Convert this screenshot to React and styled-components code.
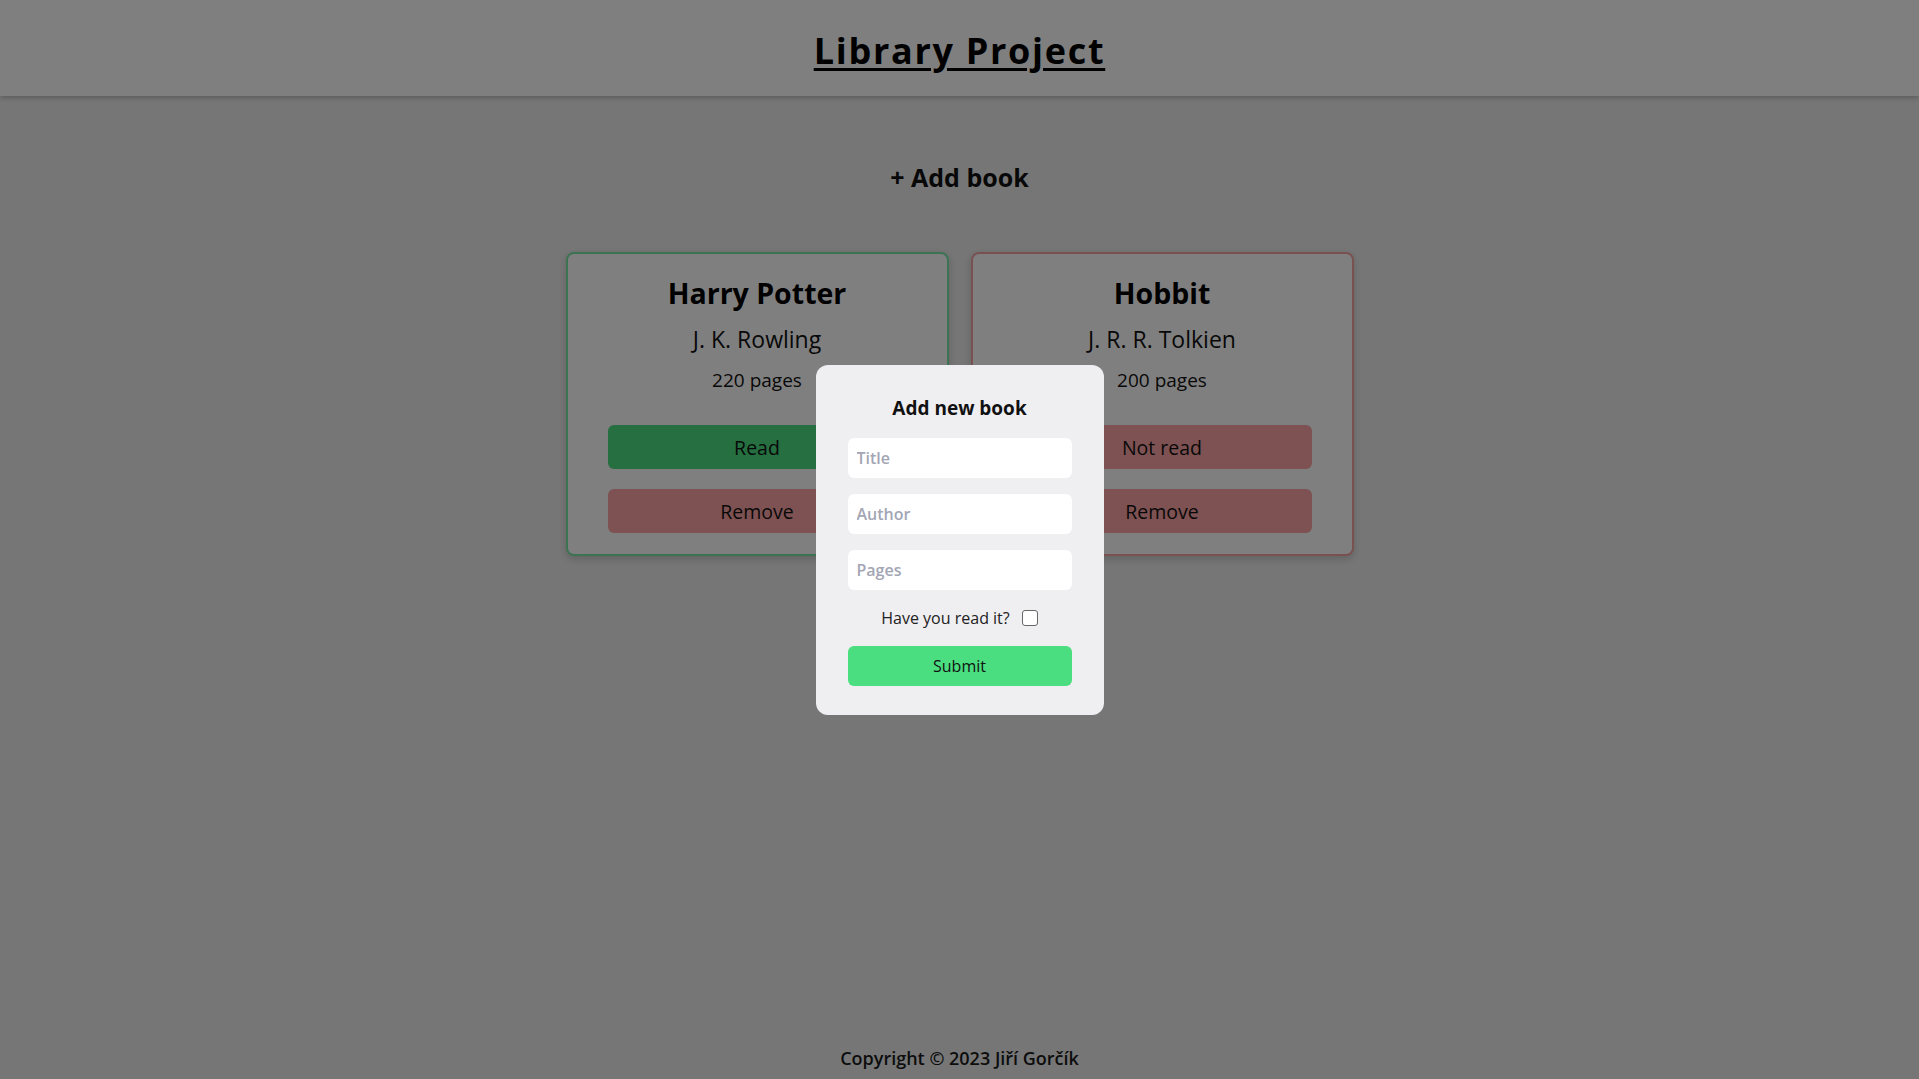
import React from "react";
import styled, { createGlobalStyle } from "styled-components";

const GlobalStyle = createGlobalStyle`
  * { box-sizing: border-box; }
  html, body { margin: 0; padding: 0; }
  body {
    font-family: "Open Sans", "Noto Sans", sans-serif;
    background: #eeeeee;
    color: #111;
  }
`;

const Page = styled.div`
  min-height: 100vh;
  display: flex;
  flex-direction: column;
  background: #ededed;
`;

const Header = styled.header`
  height: 96px;
  background: #ffffff;
  box-shadow: 0 2px 5px rgba(0, 0, 0, 0.22);
  display: flex;
  align-items: center;
  justify-content: center;
  position: relative;
  z-index: 1;
`;

const Title = styled.h1`
  margin: 0;
  font-size: 36px;
  line-height: 44px;
  font-weight: 700;
  letter-spacing: 1.7px;
  text-decoration: underline;
  text-decoration-thickness: 3px;
  text-underline-offset: 4px;
  color: #000;
  padding-top: 6px;
`;

const Main = styled.main`
  flex: 1;
  display: flex;
  flex-direction: column;
  align-items: center;
  padding-top: 64px;
`;

const AddButton = styled.button`
  background: none;
  border: none;
  font-family: inherit;
  font-size: 25px;
  line-height: 34px;
  font-weight: 700;
  color: #111;
  padding: 0;
  cursor: pointer;
`;

const CardGrid = styled.div`
  margin-top: 58px;
  display: grid;
  grid-template-columns: repeat(2, 383px);
  gap: 22px;
`;

const Card = styled.div`
  background: #ffffff;
  border: 2px solid ${(p) => (p.$read ? "#78e8a6" : "#f5a3a3")};
  border-radius: 8px;
  box-shadow: 0 3px 8px rgba(0, 0, 0, 0.18);
  padding: 19px 40px 21px;
  display: flex;
  flex-direction: column;
  align-items: center;
`;

const BookTitle = styled.h2`
  margin: 0;
  font-size: 28.5px;
  line-height: 40px;
  font-weight: 700;
  color: #000;
`;

const Author = styled.p`
  margin: 11px 0 0;
  font-size: 23px;
  line-height: 30px;
  color: #111;
`;

const Pages = styled.p`
  margin: 13px 0 0;
  font-size: 19px;
  line-height: 26px;
  color: #111;
`;

const CardButton = styled.button`
  width: 100%;
  height: 44px;
  margin-top: ${(p) => p.$mt}px;
  border: none;
  border-radius: 6px;
  background: ${(p) => p.$bg};
  font-family: inherit;
  font-size: 19.5px;
  font-weight: 500;
  color: #111;
  padding-top: 2px;
  cursor: pointer;
`;

const Overlay = styled.div`
  position: fixed;
  inset: 0;
  background: rgba(0, 0, 0, 0.5);
  display: flex;
  align-items: center;
  justify-content: center;
  z-index: 10;
`;

const Modal = styled.form`
  width: 288px;
  background: #efeef1;
  border-radius: 12px;
  padding: 29px 32px 29px;
  display: flex;
  flex-direction: column;
  gap: 16px;
`;

const ModalTitle = styled.h3`
  margin: 0;
  text-align: center;
  font-size: 19px;
  line-height: 28px;
  font-weight: 700;
  color: #111;
`;

const Input = styled.input`
  height: 40px;
  width: 100%;
  border: none;
  border-radius: 6px;
  background: #ffffff;
  padding: 0 9px;
  font-family: inherit;
  font-size: 16px;
  font-weight: 600;
  color: #111;
  outline: none;
  caret-color: #000;
  &::placeholder {
    color: #a3a6b4;
  }
`;

const CheckRow = styled.label`
  height: 24px;
  display: flex;
  align-items: center;
  justify-content: center;
  gap: 12px;
  font-size: 16px;
  color: #222;
`;

const Checkbox = styled.input`
  margin: 0;
  width: 16px;
  height: 16px;
  appearance: none;
  border: 1px solid #666;
  border-radius: 3px;
  background: #fff;
`;

const Submit = styled.button`
  height: 40px;
  border: none;
  border-radius: 6px;
  background: #4ade80;
  font-family: inherit;
  font-size: 16px;
  color: #111;
  cursor: pointer;
`;

const Footer = styled.footer`
  text-align: center;
  padding: 0 0 9px;
  font-size: 18px;
  line-height: 24px;
  font-weight: 600;
  color: #1a1a1a;
`;

const books = [
  { title: "Harry Potter", author: "J. K. Rowling", pages: 220, read: true },
  { title: "Hobbit", author: "J. R. R. Tolkien", pages: 200, read: false },
];

export default function App() {
  return (
    <>
      <GlobalStyle />
      <Page>
        <Header>
          <Title>Library Project</Title>
        </Header>
        <Main>
          <AddButton>+ Add book</AddButton>
          <CardGrid>
            {books.map((b) => (
              <Card key={b.title} $read={b.read}>
                <BookTitle>{b.title}</BookTitle>
                <Author>{b.author}</Author>
                <Pages>{b.pages} pages</Pages>
                <CardButton $mt={32} $bg={b.read ? "#4ade80" : "#fca5a5"}>
                  {b.read ? "Read" : "Not read"}
                </CardButton>
                <CardButton $mt={20} $bg="#fca5a5">
                  Remove
                </CardButton>
              </Card>
            ))}
          </CardGrid>
        </Main>
        <Footer>Copyright © 2023 Jiří Gorčík</Footer>
      </Page>
      <Overlay>
        <Modal onSubmit={(e) => e.preventDefault()}>
          <ModalTitle>Add new book</ModalTitle>
          <Input placeholder="Title" autoFocus />
          <Input placeholder="Author" />
          <Input placeholder="Pages" />
          <CheckRow>
            Have you read it?
            <Checkbox type="checkbox" />
          </CheckRow>
          <Submit type="submit">Submit</Submit>
        </Modal>
      </Overlay>
    </>
  );
}
